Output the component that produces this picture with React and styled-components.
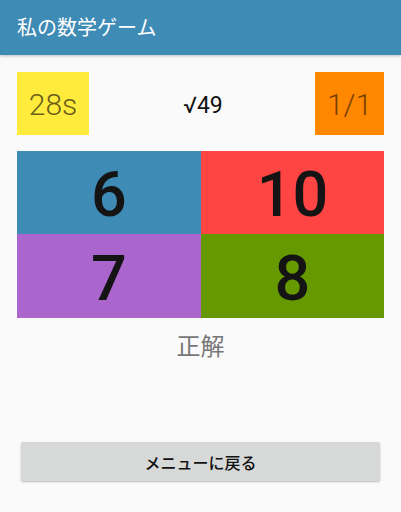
import React from 'react'
import styled, { createGlobalStyle } from 'styled-components';

const GlobalStyle = createGlobalStyle`
  html, body {
    margin: 0;
    padding: 0;
    background: #fafafa;
  }
  body {
    font-family: Roboto, "Noto Sans CJK JP", sans-serif;
  }
`

const answers = [
  { value: 6, color: '#3e8bb6' },
  { value: 10, color: '#ff4444' },
  { value: 7, color: '#aa66cc' },
  { value: 8, color: '#669900' },
];

function App() {
  return (
    <Screen>
      <GlobalStyle />
      <AppBar>私の数学ゲーム</AppBar>
      <Content>
        <StatusRow>
          <Badge bg="#ffeb3b" fg="#6b5f1a">28s</Badge>
          <Question>√49</Question>
          <Badge bg="#ff8800" fg="#7a4000" narrow>1/1</Badge>
        </StatusRow>
        <AnswerGrid>
          {answers.map((a) => (
            <AnswerCell key={a.value} bg={a.color}>{a.value}</AnswerCell>
          ))}
        </AnswerGrid>
        <Result>正解</Result>
        <BackButton>メニューに戻る</BackButton>
      </Content>
    </Screen>
  )
}

const Screen = styled.div`
  width: 401px;
  height: 512px;
  display: flex;
  flex-direction: column;
  background: #fafafa;
  overflow: hidden;
`

const AppBar = styled.div`
  height: 55px;
  display: flex;
  align-items: center;
  padding: 0 17px 2px;
  box-sizing: border-box;
  background: #3e8bb6;
  color: #fff;
  font-size: 20px;
  font-family: "Noto Sans CJK JP", sans-serif;
  box-shadow: 0 1px 3px rgba(0,0,0,0.25);
`

const Content = styled.div`
  display: flex;
  flex-direction: column;
  padding: 17px 17px 0;
`

const StatusRow = styled.div`
  display: flex;
  align-items: center;
  justify-content: space-between;
  height: 63px;
`

const Badge = styled.div`
  width: ${p => p.narrow ? '69px' : '72px'};
  height: 63px;
  display: flex;
  align-items: center;
  justify-content: center;
  background: ${p => p.bg};
  color: ${p => p.fg};
  font-size: 30px;
  font-weight: 300;
  padding-top: 2px;
  box-sizing: border-box;
`

const Question = styled.div`
  font-size: 23px;
  color: #111;
  padding-top: 4px;
  margin-left: 2px;
`

const AnswerGrid = styled.div`
  margin-top: 16px;
  display: grid;
  grid-template-columns: 184px 183px;
  grid-template-rows: 83px 84px;
`

const AnswerCell = styled.div`
  display: flex;
  align-items: center;
  justify-content: center;
  background: ${p => p.bg};
  color: #141414;
  font-size: 63px;
  font-weight: 500;
  padding-top: 4px;
  box-sizing: border-box;
`

const Result = styled.div`
  margin-top: 12px;
  text-align: center;
  font-size: 24px;
  color: #777;
  font-family: "Noto Sans CJK JP", sans-serif;
  line-height: 30px;
`

const BackButton = styled.button`
  margin: 82px 4px 0;
  height: 39px;
  border: none;
  border-radius: 2px;
  background: #d7d8d8;
  box-shadow: 0 1px 2px rgba(0,0,0,0.25);
  font-size: 16px;
  font-weight: 500;
  color: #111;
  font-family: "Noto Sans CJK JP", sans-serif;
  padding: 0;
`

export default App
